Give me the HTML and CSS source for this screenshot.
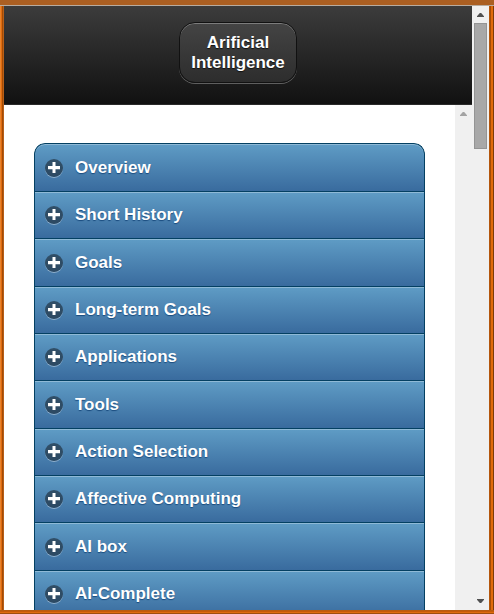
FILE: index.html
```html
<!DOCTYPE html>
<html lang="en">
<head>
<meta charset="utf-8">
<title>Arificial Intelligence</title>
<link rel="stylesheet" href="styles.css">
</head>
<body>
<svg class="defs" aria-hidden="true"><defs><symbol id="plus" viewBox="0 0 18 18"><path d="M7.500 3h3v4H15v3.200h-4.500V14h-3v-3.800H3V7h4.500z" fill="#fff"/></symbol></defs></svg>
<div class="window">
  <div class="top-edge"></div>
  <div class="frame">
    <div class="left-edge"></div>
    <main class="page">
      <header><a class="title">Arificial<br>Intelligence</a></header>
      <div class="body">
        <div class="content">
          <div class="list">
            <div class="row"><span class="icon"><svg><use href="#plus"/></svg></span><span>Overview</span></div>
            <div class="row"><span class="icon"><svg><use href="#plus"/></svg></span><span>Short History</span></div>
            <div class="row"><span class="icon"><svg><use href="#plus"/></svg></span><span>Goals</span></div>
            <div class="row"><span class="icon"><svg><use href="#plus"/></svg></span><span>Long-term Goals</span></div>
            <div class="row"><span class="icon"><svg><use href="#plus"/></svg></span><span>Applications</span></div>
            <div class="row"><span class="icon"><svg><use href="#plus"/></svg></span><span>Tools</span></div>
            <div class="row"><span class="icon"><svg><use href="#plus"/></svg></span><span>Action Selection</span></div>
            <div class="row"><span class="icon"><svg><use href="#plus"/></svg></span><span>Affective Computing</span></div>
            <div class="row"><span class="icon"><svg><use href="#plus"/></svg></span><span>AI box</span></div>
            <div class="row"><span class="icon"><svg><use href="#plus"/></svg></span><span>AI-Complete</span></div>
          </div>
        </div>
        <div class="inner-scroll"><i class="arrow up muted"></i></div>
      </div>
    </main>
    <div class="scroll"><i class="arrow up"></i><div class="thumb"></div><i class="arrow down"></i></div>
    <div class="right-edge"></div>
  </div>
  <div class="bottom-edge"></div>
</div>
</body>
</html>
```
FILE: styles.css
```css
* { box-sizing: border-box; }
body { margin: 0; font-family: "Liberation Sans", Arial, sans-serif; overflow: hidden; }
.defs { display: none; }
.window { width: 494px; height: 614px; display: flex; flex-direction: column; background: #d9670c; }
.top-edge { height: 6px; flex: none; background: #ab5f22; border-bottom: 1px solid #b8aca0; }
.frame { height: 604px; display: flex; }
.left-edge { width: 4px; background: linear-gradient(90deg, #e8832c 0 1px, #df6a0e 1px 2px, #a24b05 2px 3px, #b95f17 3px); }
.right-edge { width: 5px; background: linear-gradient(90deg, #b4560d 0 1px, #a24b05 1px 2px, #e06a0b 2px 4px, #7b3b08 4px); }
.bottom-edge { height: 4px; background: linear-gradient(#b95b10 0 1px, #c65a08 1px 2px, #df6a0e 2px 3px, #a04d0b 3px); }
.page { width: 468px; display: flex; flex-direction: column; background: #fff; overflow: hidden; }
header { height: 99px; flex: none; display: flex; justify-content: center; align-items: flex-start; padding-top: 16px; background: linear-gradient(#3c3c3c, #111); border-bottom: 1px solid #2a2a2a; }
.title { width: 118px; height: 61px; padding-top: 10px; text-align: center; color: #fff; font-weight: 700; font-size: 17px; line-height: 20px; border: 1px solid #111; border-radius: 16px; background: linear-gradient(#444, #2d2d2d); text-shadow: 0 1px 1px #111; box-shadow: inset 0 1px 0 rgba(255,255,255,.3), 0 1px 0 rgba(255,255,255,.3); }
.body { height: 505px; display: flex; }
.content { width: 451px; padding: 38px 30px 0; }
.list { height: 467px; overflow: hidden; border-radius: 11px 11px 0 0; }
.row { height: 47.36px; display: flex; align-items: center; padding: .5px 0 0 10px; gap: 12px; color: #fff; font-weight: 700; font-size: 17px; border: 1px solid #044062; border-bottom: 0; background: linear-gradient(#5f9cc5, #396b9e); text-shadow: 0 1px 1px #194b7e; box-shadow: inset 0 1px 0 rgba(255,255,255,.3); }
.row:first-child { height: 47.9px; border-radius: 11px 11px 0 0; }
.icon { width: 18px; height: 18px; border-radius: 50%; background: rgba(34,52,68,.7); box-shadow: 0 1px 0 rgba(255,255,255,.4); }
.icon svg { display: block; width: 18px; height: 18px; }
.inner-scroll { width: 17px; background: #f0f0f0; padding: 7px 0 0 5px; }
.scroll { width: 17px; background: #f0f0f0; display: flex; flex-direction: column; align-items: center; padding: 7px 0; }
.thumb { width: 13px; height: 126px; margin-top: 6px; background: #a8a8a8; border: 1px solid #949494; }
.arrow { display: block; width: 7px; height: 4px; background: #505050; clip-path: polygon(40% 0, 60% 0, 100% 80%, 100% 100%, 0 100%, 0 80%); }
.muted { background: #a3a3a3; }
.down { margin-top: auto; clip-path: polygon(0 0, 100% 0, 100% 20%, 60% 100%, 40% 100%, 0 20%); }
```
